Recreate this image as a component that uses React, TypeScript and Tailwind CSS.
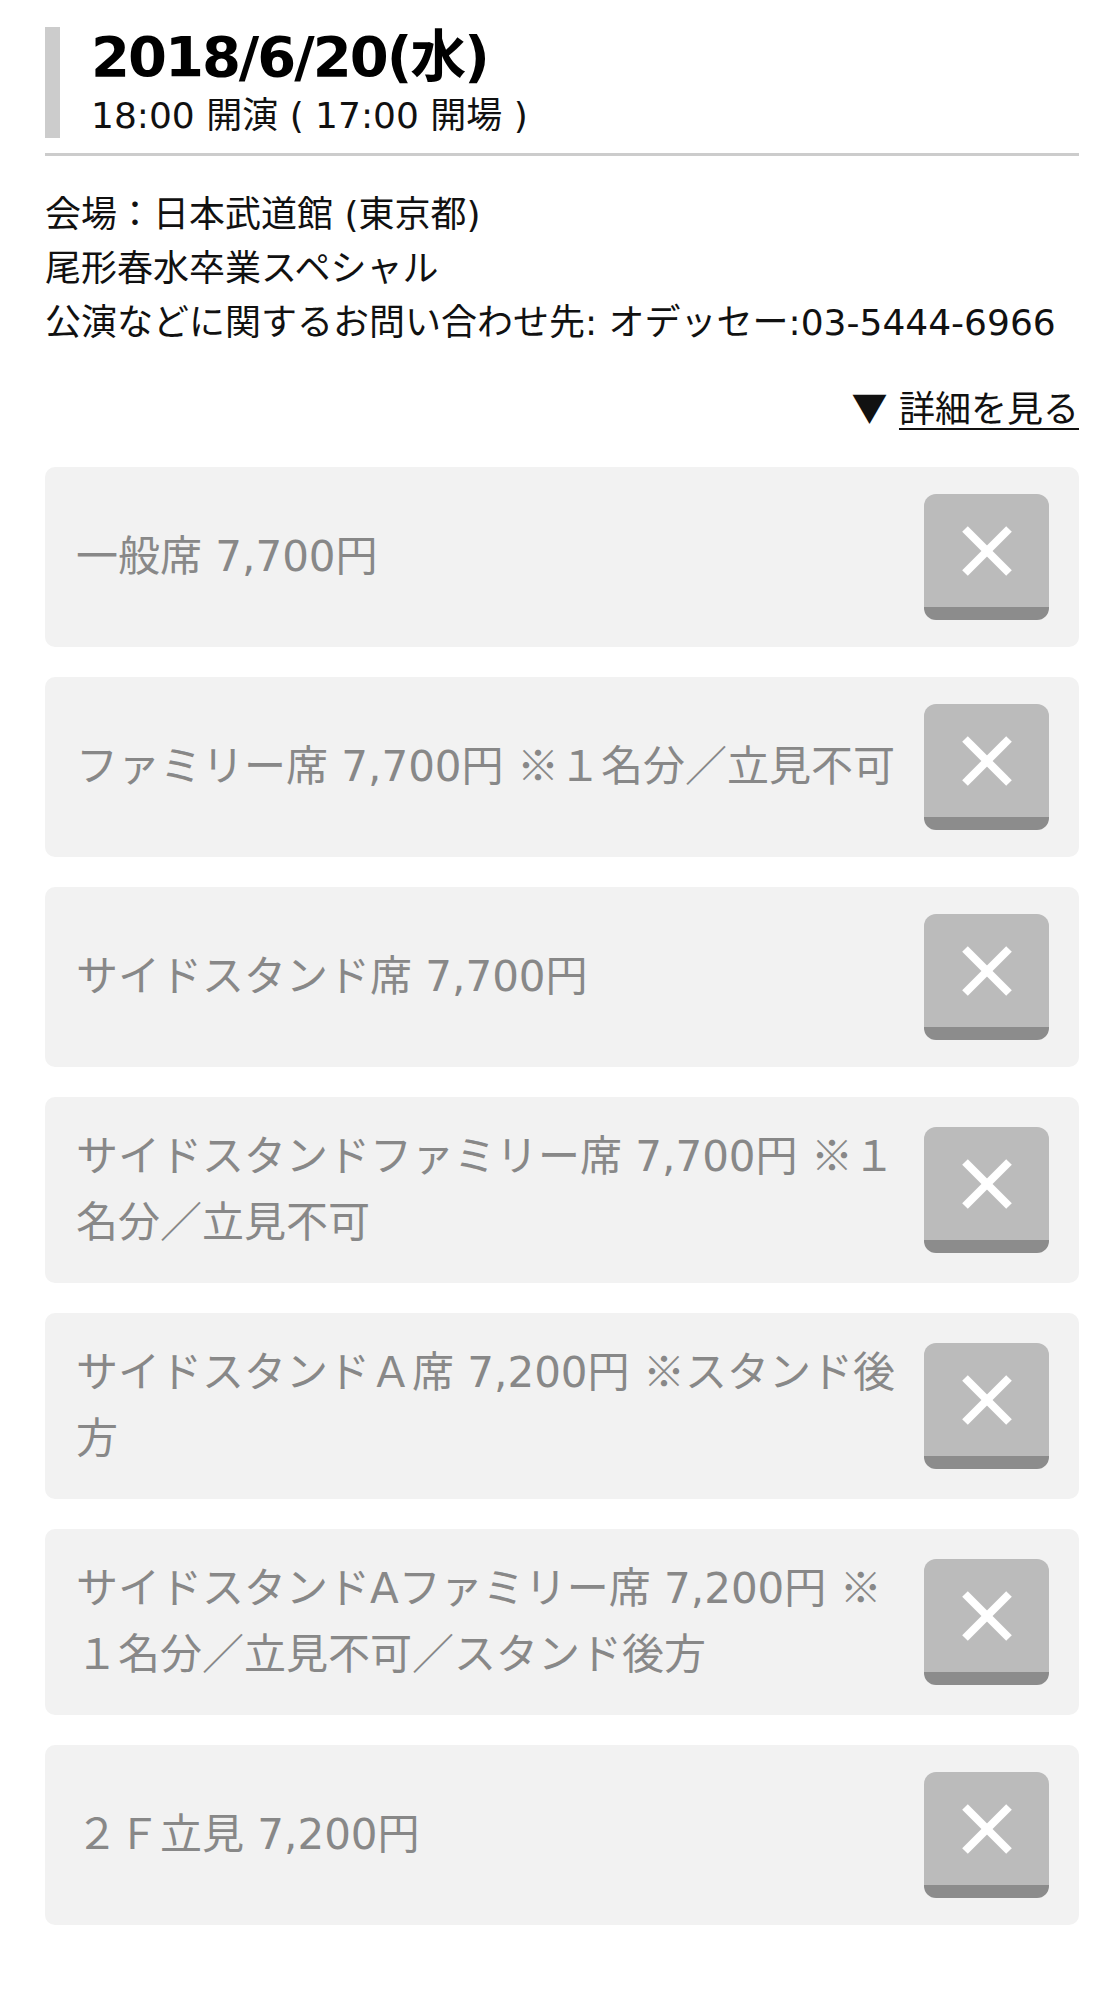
import React from "react";

const K = ({ children }: { children: React.ReactNode }) => (
  <span className="font-['Noto_Sans_CJK_JP',sans-serif] leading-[0px]">{children}</span>
);

const XButton = () => (
  <div className="shrink-0 w-[125px] h-[126px] rounded-[12px] bg-[#bbbbbb] border-b-[13px] border-[#8c8c8c] flex items-center justify-center">
    <svg width="54" height="54" viewBox="0 0 54 54">
      <line x1="5" y1="5" x2="49" y2="49" stroke="#ffffff" strokeWidth="8" />
      <line x1="49" y1="5" x2="5" y2="49" stroke="#ffffff" strokeWidth="8" />
    </svg>
  </div>
);

const Card = ({ children }: { children: React.ReactNode }) => (
  <div className="flex items-center rounded-[10px] bg-[#f2f2f2] pl-[31px] pr-[30px] py-[27px]">
    <div className="flex-1 min-w-0 whitespace-nowrap text-[42px] leading-[66px] text-[#888888]">
      {children}
    </div>
    <XButton />
  </div>
);

export default function App() {
  return (
    <div className="w-full min-h-[1991px] bg-white pl-[45px] pr-[38px] pt-[27px] pb-[60px] text-[#111111] font-['DejaVu_Sans','Noto_Sans_CJK_JP',sans-serif]">
      <div className="pb-[15px] border-b-[3px] border-[#cccccc]">
        <div className="border-l-[15px] border-[#cccccc] pl-[31px]">
          <div className="text-[56px] leading-[59px] font-bold tracking-[-2px] text-black">
            2018/6/20(水)
          </div>
          <div className="mt-[7px] text-[36px] leading-[45px]">
            18:00 開演 ( 17:00 開場 )
          </div>
        </div>
      </div>

      <div className="mt-[32px] text-[36px] leading-[54px]">
        <p>会場：日本武道館 (東京都)</p>
        <p>尾形春水卒業スペシャル</p>
        <p>公演などに関するお問い合わせ先: オデッセー:03-5444-6966</p>
      </div>

      <div className="mt-[33px] text-right text-[36px] leading-[54px]">
        <K>▼</K> <span className="underline decoration-2 underline-offset-[6px]">詳細を見る</span>
      </div>

      <div className="mt-[30px] flex flex-col gap-[30px]">
        <Card>一般席 7,700円</Card>
        <Card>
          ファミリー席 7,700円 <K>※</K>１名分／立見不可
        </Card>
        <Card>サイドスタンド席 7,700円</Card>
        <Card>
          サイドスタンドファミリー席 7,700円 <K>※</K>１
          <br />
          名分／立見不可
        </Card>
        <Card>
          サイドスタンドＡ席 7,200円 <K>※</K>スタンド後
          <br />
          方
        </Card>
        <Card>
          サイドスタンドAファミリー席 7,200円 <K>※</K>
          <br />
          １名分／立見不可／スタンド後方
        </Card>
        <Card>２Ｆ立見 7,200円</Card>
      </div>
    </div>
  );
}
